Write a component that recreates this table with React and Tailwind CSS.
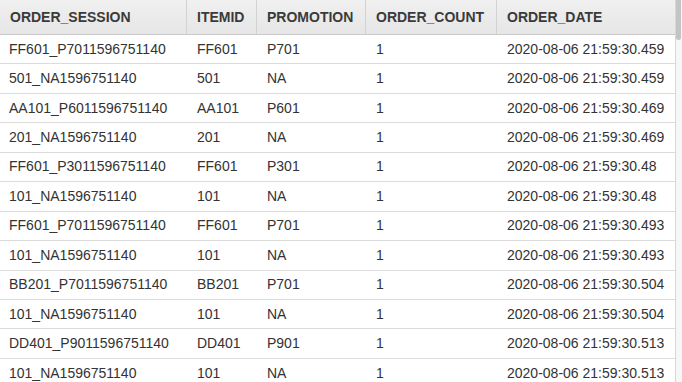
import React from 'react';

const rows = [
  ['FF601_P7011596751140', 'FF601', 'P701', '1', '2020-08-06 21:59:30.459'],
  ['501_NA1596751140', '501', 'NA', '1', '2020-08-06 21:59:30.459'],
  ['AA101_P6011596751140', 'AA101', 'P601', '1', '2020-08-06 21:59:30.469'],
  ['201_NA1596751140', '201', 'NA', '1', '2020-08-06 21:59:30.469'],
  ['FF601_P3011596751140', 'FF601', 'P301', '1', '2020-08-06 21:59:30.48'],
  ['101_NA1596751140', '101', 'NA', '1', '2020-08-06 21:59:30.48'],
  ['FF601_P7011596751140', 'FF601', 'P701', '1', '2020-08-06 21:59:30.493'],
  ['101_NA1596751140', '101', 'NA', '1', '2020-08-06 21:59:30.493'],
  ['BB201_P7011596751140', 'BB201', 'P701', '1', '2020-08-06 21:59:30.504'],
  ['101_NA1596751140', '101', 'NA', '1', '2020-08-06 21:59:30.504'],
  ['DD401_P9011596751140', 'DD401', 'P901', '1', '2020-08-06 21:59:30.513'],
  ['101_NA1596751140', '101', 'NA', '1', '2020-08-06 21:59:30.513'],
];

const cols = [
  { name: 'ORDER_SESSION', w: 'w-[187px]' },
  { name: 'ITEMID', w: 'w-[70px]' },
  { name: 'PROMOTION', w: 'w-[109px]' },
  { name: 'ORDER_COUNT', w: 'w-[131px]' },
  { name: 'ORDER_DATE', w: 'flex-1' },
];

const App = () => {
  return (
    <div className="flex h-[382px] w-[682px] overflow-hidden bg-[#f7f7f7] font-['Liberation_Sans',Arial,sans-serif] text-[14px]">
      {/* table */}
      <div className="flex w-[676px] flex-col border-r border-[#d6d6d6] bg-white">
        <div className="flex h-[35px] shrink-0 border-b border-[#c9c9c9] bg-gradient-to-b from-[#f0f0f0] to-[#e6e6e6] font-bold text-[#3a3a3a]">
          {cols.map((c, i) => (
            <div
              key={c.name}
              className={`${c.w} flex items-center pl-[10px] ${i < cols.length - 1 ? 'border-r border-[#d2d2d2]' : ''}`}
            >
              {c.name}
            </div>
          ))}
        </div>
        {rows.map((r, i) => (
          <div key={i} className="flex h-[29.45px] shrink-0 border-b border-[#dcdcdc] text-[#333]">
            {r.map((v, j) => (
              <div key={j} className={`${cols[j].w} flex items-center ${j > 0 ? 'pl-[10px]' : 'pl-[9px]'}`}>
                {v}
              </div>
            ))}
          </div>
        ))}
      </div>
      {/* scrollbar */}
      <div className="flex w-[6px] flex-col">
        <div className="h-[40px] w-[5px] rounded-b-full bg-[#c4c4c4]" />
      </div>
    </div>
  );
};

export default App;
